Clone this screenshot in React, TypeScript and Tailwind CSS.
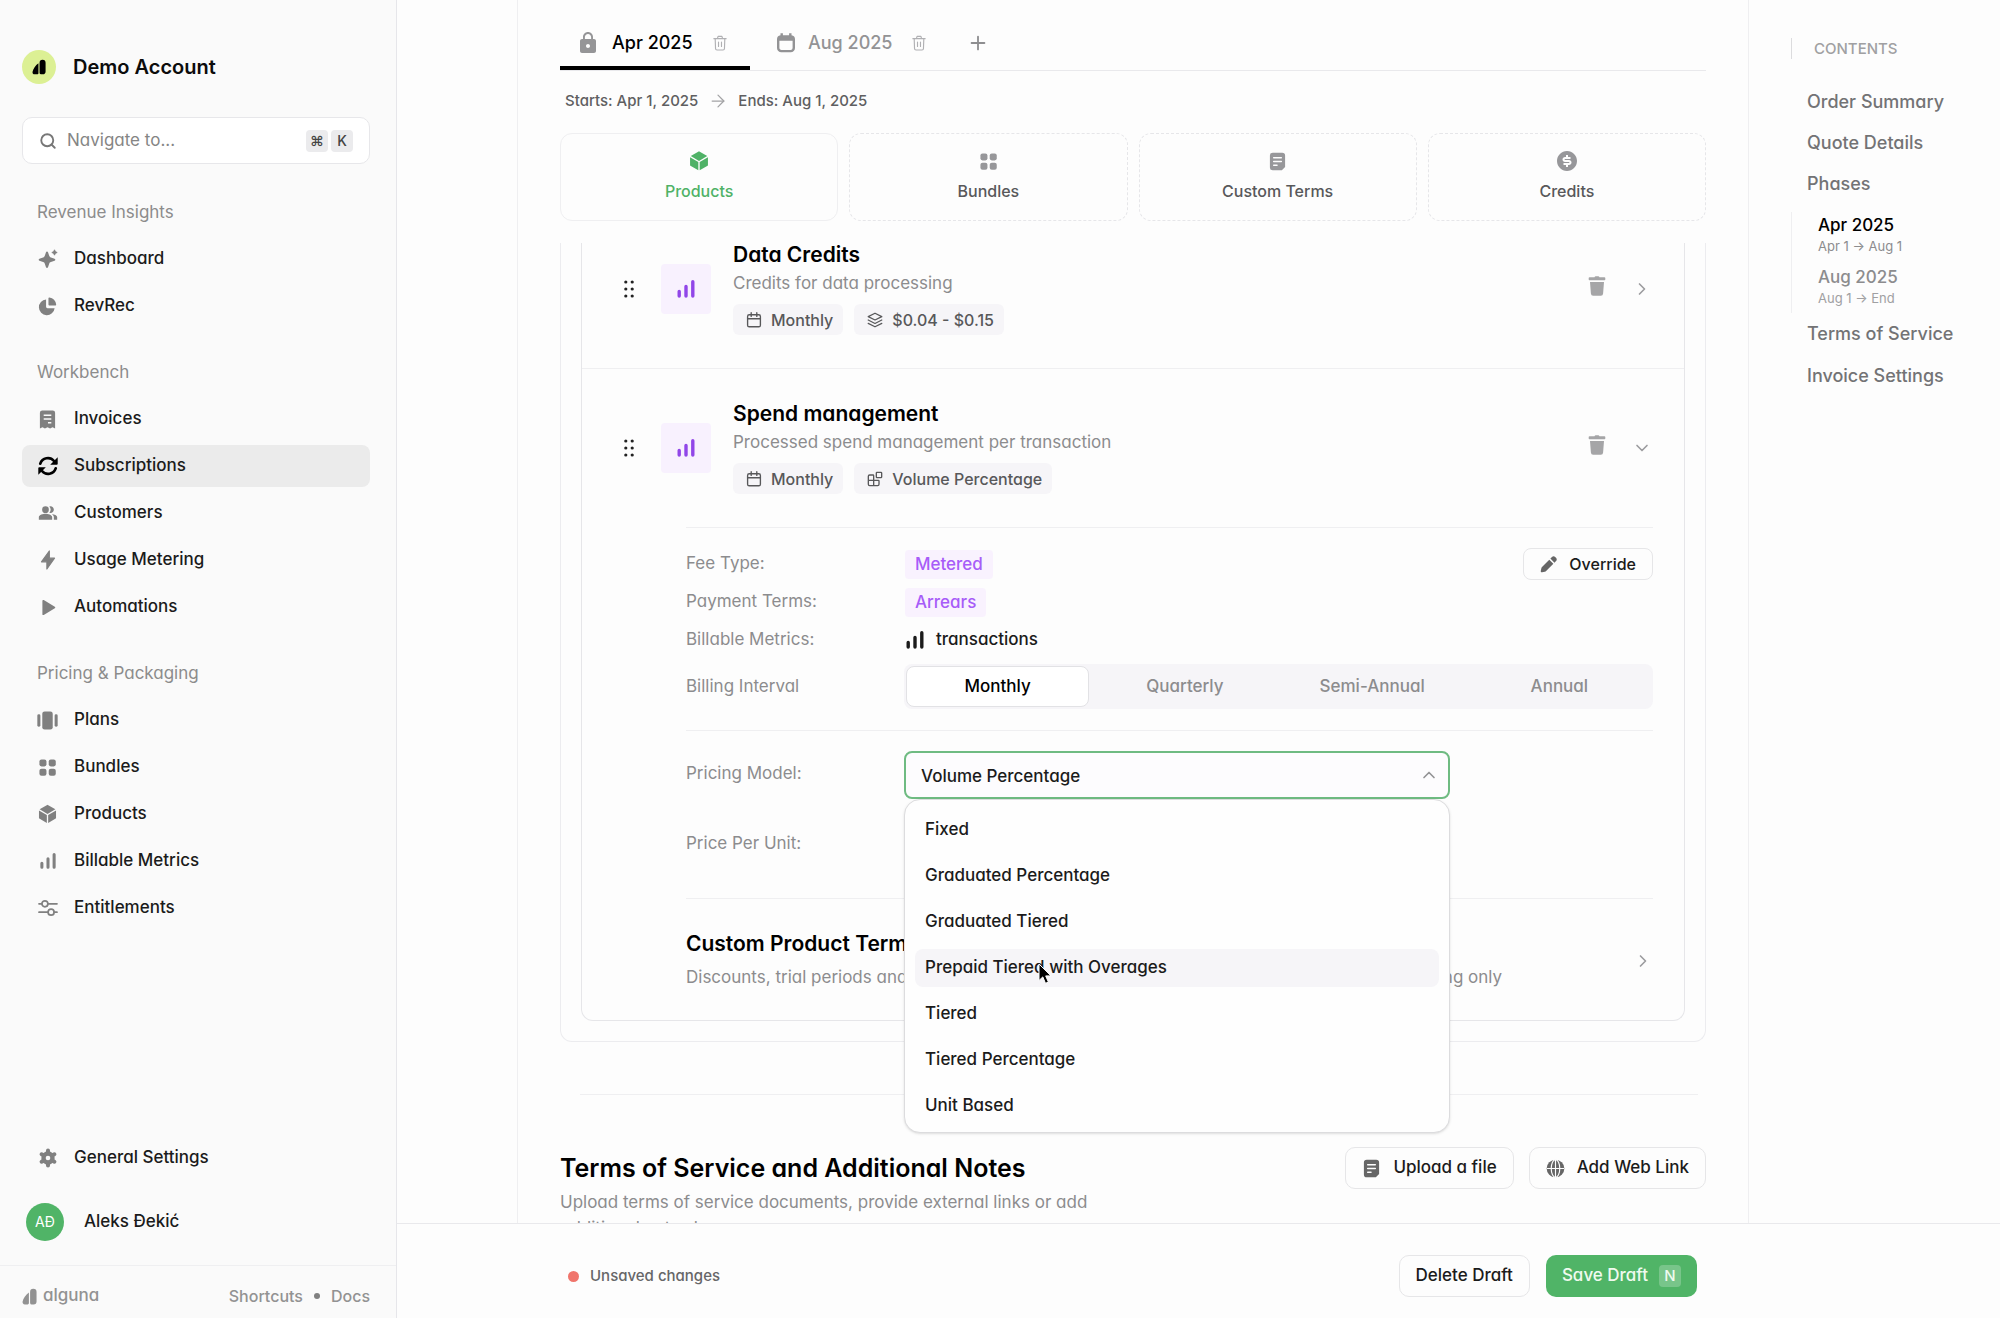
import { useState } from 'react'
import type { ReactNode } from 'react'
import { clsx } from 'clsx'
import { ArrowRight, Blocks, ChevronDown, ChevronRight, ChevronUp, Plus, Search } from 'lucide-react'
import { HiCube } from 'react-icons/hi2'
import { MdLock, MdPeopleAlt } from 'react-icons/md'
import { RiMoneyDollarCircleFill } from 'react-icons/ri'

type IconProps = { className?: string }

function SparkleIcon({ className }: IconProps) {
  return (
    <svg viewBox="0 0 20 20" fill="currentColor" className={className}>
      <path d="M9 2.5c.5 0 .8.3 1 .8l1.2 3.4c.3.9.8 1.4 1.7 1.7l3.7 1.3c1 .4 1 1.600 0 2l-3.700 1.300c-.9.3-1.400.8-1.700 1.700L10 18.200c-.4 1-1.600 1-2 0l-1.200-3.500c-.3-.9-.8-1.400-1.700-1.700L1.400 11.700c-1-.4-1-1.600 0-2l3.700-1.300c.9-.3 1.400-.8 1.700-1.700L8 3.300c.2-.5.5-.8 1-.8z" />
      <path d="M16.500 0.800l.9 1.800 1.800.9-1.800.9-.9 1.800-.9-1.800-1.800-.9 1.800-.9z" stroke="currentColor" strokeWidth=".8" strokeLinejoin="round" />
    </svg>
  )
}

function PieIcon({ className }: IconProps) {
  return (
    <svg viewBox="0 0 20 20" fill="currentColor" className={className}>
      <path d="M8.500 2.600a8.300 8.300 0 1 0 9 9.200H10a1.500 1.500 0 0 1-1.500-1.500z" />
      <path d="M11 1.200c0-.5.400-.8.900-.7a8.600 8.600 0 0 1 7.200 7.400c.1.600-.3 1.100-.9 1.100H12a1 1 0 0 1-1-1z" />
    </svg>
  )
}

function ReceiptIcon({ className }: IconProps) {
  return (
    <svg viewBox="0 0 20 20" className={className}>
      <path fill="currentColor" d="M4.500.5h11A2.500 2.500 0 0 1 18 3v16.500l-2.700-1.300-2.600 1.300L10 18.200l-2.700 1.300-2.600-1.300L2 19.500V3A2.500 2.500 0 0 1 4.500.5z" />
      <path stroke="#fafafa" strokeWidth="1.600" d="M6 5.500h8M6 9.500h8M10.500 13.500H14" />
    </svg>
  )
}

function SyncIcon({ className }: IconProps) {
  return (
    <svg viewBox="0 0 20 20" className={className}>
      <path fill="none" stroke="currentColor" strokeWidth="2.700" strokeLinecap="round" d="M2.300 7.600A8 8 0 0 1 16 5M17.700 12.400A8 8 0 0 1 4 15" />
      <path fill="currentColor" d="M19.700 1.200v6.800c0 .5-.4.800-.9.800h-6.600zM.3 18.800V12c0-.5.400-.8.900-.8h6.600z" />
    </svg>
  )
}

function BoltIcon({ className }: IconProps) {
  return (
    <svg viewBox="0 0 20 20" fill="currentColor" stroke="currentColor" strokeWidth="1.200" strokeLinejoin="round" className={className}>
      <path d="M11.300 1v7.200h5.200L8.900 19v-7.200H3.500z" />
    </svg>
  )
}

function PlayIcon({ className }: IconProps) {
  return (
    <svg viewBox="0 0 20 20" fill="currentColor" className={className}>
      <path d="M4 2.200c0-.9.900-1.400 1.600-1l13 7.900c.7.400.7 1.400 0 1.800l-13 7.900c-.7.400-1.600-.1-1.600-1z" />
    </svg>
  )
}

function CarouselIcon({ className }: IconProps) {
  return (
    <svg viewBox="0 0 22 20" fill="currentColor" className={className}>
      <rect x="5.500" y=".5" width="11" height="19" rx="2.500" />
      <rect x=".3" y="3.500" width="3.200" height="13" rx="1.400" />
      <rect x="18.500" y="3.500" width="3.200" height="13" rx="1.400" />
    </svg>
  )
}

function GridIcon({ className }: IconProps) {
  return (
    <svg viewBox="0 0 20 20" fill="currentColor" className={className}>
      <rect x="1.500" y="1.500" width="7.400" height="7.400" rx="2.200" />
      <rect x="11.300" y="1.500" width="7.400" height="7.400" rx="2.200" />
      <rect x="1.500" y="11.300" width="7.400" height="7.400" rx="2.200" />
      <rect x="11.300" y="11.300" width="7.400" height="7.400" rx="2.200" />
    </svg>
  )
}

function BarsIcon({ className }: IconProps) {
  return (
    <svg viewBox="0 0 20 20" fill="none" stroke="currentColor" strokeWidth="3.400" strokeLinecap="round" className={className}>
      <path d="M3.200 12.500V17M10 7.500V17M16.800 2.800V17" />
    </svg>
  )
}

function SlidersIcon({ className }: IconProps) {
  return (
    <svg viewBox="0 0 20 20" fill="none" stroke="currentColor" strokeWidth="1.700" strokeLinecap="round" className={className}>
      <path d="M1 5.800h2.800M10 5.800h9M1 14.200h9M16.200 14.200H19" />
      <circle cx="6.900" cy="5.800" r="3" />
      <circle cx="13.100" cy="14.200" r="3" />
    </svg>
  )
}

function GearIcon({ className }: IconProps) {
  return (
    <svg viewBox="0 0 20 20" className={className}>
      <path
        fill="none"
        stroke="currentColor"
        strokeWidth="4"
        strokeLinecap="round"
        d="M10 2.600v14.800M3.600 6.300l12.800 7.400M3.600 13.700l12.800-7.400"
      />
      <circle cx="10" cy="10" r="6.700" fill="currentColor" />
      <circle cx="10" cy="10" r="2.300" fill="#fafafa" />
    </svg>
  )
}

function CalendarTabIcon({ className }: IconProps) {
  return (
    <svg viewBox="0 0 20 20" className={className}>
      <path fill="currentColor" fillRule="evenodd" d="M4.500.3h2.400v2h6.200v-2h2.400v2A4 4 0 0 1 19 6.300V15a4.300 4.300 0 0 1-4.300 4.300H5.300A4.300 4.300 0 0 1 1 15V6.300a4 4 0 0 1 3.500-4zM3.400 7.800V15c0 1.100.9 1.900 2 1.900h9.200a2 2 0 0 0 2-1.900V7.800z" />
    </svg>
  )
}

function CalendarIcon({ className }: IconProps) {
  return (
    <svg viewBox="0 0 20 20" fill="none" stroke="currentColor" strokeWidth="1.700" strokeLinecap="round" className={className}>
      <rect x="2" y="3.500" width="16" height="15" rx="2" />
      <path d="M2 8.500h16M6.500 1v4.500M13.500 1v4.500" />
    </svg>
  )
}

function TrashOutlineIcon({ className }: IconProps) {
  return (
    <svg viewBox="0 0 16 18" fill="none" stroke="currentColor" strokeWidth="1.300" strokeLinecap="round" strokeLinejoin="round" className={className}>
      <path d="M1 4h14M5 4l.8-2.500h4.400L11 4M2.500 4l.4 11.300c0 1 .8 1.700 1.700 1.700h6.800c.9 0 1.700-.7 1.700-1.700L13.500 4M6.300 8v5M9.700 8v5" />
    </svg>
  )
}

function TrashIcon({ className }: IconProps) {
  return (
    <svg viewBox="0 0 18 20" fill="currentColor" className={className}>
      <path d="M6.500 1.200C6.700.6 7.200.3 7.800.3h2.400c.6 0 1.100.3 1.300.9h5c.5 0 .8.300.8.800v1.500c0 .4-.3.700-.7.700H1.400c-.4 0-.7-.3-.7-.7V2c0-.5.300-.8.8-.8z" />
      <path d="M2 6h14l-.9 11.500a2.300 2.300 0 0 1-2.300 2.200H5.200a2.300 2.300 0 0 1-2.300-2.200z" />
    </svg>
  )
}

function PencilIcon({ className }: IconProps) {
  return (
    <svg viewBox="0 0 20 20" fill="currentColor" className={className}>
      <path d="M10.900 4.300l4.800 4.800-8.500 8.500c-.4.400-.9.700-1.500.8l-3.300.7c-.9.200-1.700-.6-1.500-1.500l.7-3.300c.1-.6.400-1.100.8-1.500z" />
      <path d="M12.200 3l1.600-1.600a3 3 0 0 1 4.300 0l.5.500a3 3 0 0 1 0 4.300L17 7.800z" />
    </svg>
  )
}

function LayersIcon({ className }: IconProps) {
  return (
    <svg viewBox="0 0 20 20" fill="none" stroke="currentColor" strokeWidth="1.500" strokeLinecap="round" strokeLinejoin="round" className={className}>
      <path d="M10 1.500l8.500 4.300L10 10 1.500 5.800z" />
      <path d="M1.500 10l8.500 4.300 8.500-4.300M1.500 14.200l8.500 4.300 8.500-4.300" />
    </svg>
  )
}

function DocIcon({ className }: IconProps) {
  return (
    <svg viewBox="0 0 20 20" className={className}>
      <path fill="currentColor" d="M5 .8h10a3 3 0 0 1 3 3v12l-3.400 3.400H5a3 3 0 0 1-3-3V3.800a3 3 0 0 1 3-3z" />
      <path stroke="#fdfdfd" strokeWidth="1.600" strokeLinecap="round" d="M6 6h8M6 10h8M6 14h3.500" />
    </svg>
  )
}

function GlobeIcon({ className }: IconProps) {
  return (
    <svg viewBox="0 0 20 20" className={className}>
      <circle cx="10" cy="10" r="9.300" fill="currentColor" />
      <path fill="none" stroke="#fdfdfd" strokeWidth="1.200" d="M1 10h18M10 1v18" />
      <ellipse cx="10" cy="10" rx="4.500" ry="9.300" fill="none" stroke="#fdfdfd" strokeWidth="1.200" />
    </svg>
  )
}

function GripIcon({ className }: IconProps) {
  return (
    <svg viewBox="0 0 10 18" fill="currentColor" className={className}>
      {[2, 9, 16].map((y) => (
        <g key={y}>
          <circle cx="1.800" cy={y} r="1.600" />
          <circle cx="8.200" cy={y} r="1.600" />
        </g>
      ))}
    </svg>
  )
}

function BrandMark({ className }: IconProps) {
  return (
    <svg viewBox="0 0 20 22" fill="currentColor" className={className}>
      <path d="M9.200 5.500v14.300c0 1-.8 1.700-1.700 1.700H3.800C1.700 21.500.3 19.800.8 17.700c1-4.600 4-8.900 8.400-12.200z" />
      <path d="M10.800 5a4.300 4.300 0 0 1 8.600 0v12.500a4 4 0 0 1-4 4H13a2.200 2.200 0 0 1-2.200-2z" />
    </svg>
  )
}

function Cursor({ className }: IconProps) {
  return (
    <svg viewBox="0 0 14 22" className={className}>
      <path d="M1 1v16.500l3.800-3.600 2.700 6.400 2.900-1.200-2.700-6.200H13z" fill="#000" stroke="#fff" strokeWidth="1" />
    </svg>
  )
}

const NAV_SECTIONS = [
  {
    title: 'Revenue Insights',
    items: [
      { label: 'Dashboard', icon: <SparkleIcon className="size-5" /> },
      { label: 'RevRec', icon: <PieIcon className="size-[19px]" /> },
    ],
  },
  {
    title: 'Workbench',
    items: [
      { label: 'Invoices', icon: <ReceiptIcon className="size-[19px]" /> },
      { label: 'Subscriptions', icon: <SyncIcon className="size-5" />, active: true },
      { label: 'Customers', icon: <MdPeopleAlt className="size-5" /> },
      { label: 'Usage Metering', icon: <BoltIcon className="size-5" /> },
      { label: 'Automations', icon: <PlayIcon className="size-[17px]" /> },
    ],
  },
  {
    title: 'Pricing & Packaging',
    items: [
      { label: 'Plans', icon: <CarouselIcon className="h-[19px] w-[21px]" /> },
      { label: 'Bundles', icon: <GridIcon className="size-[19px]" /> },
      { label: 'Products', icon: <HiCube className="size-[22px]" /> },
      { label: 'Billable Metrics', icon: <BarsIcon className="size-[18px]" /> },
      { label: 'Entitlements', icon: <SlidersIcon className="size-5" /> },
    ],
  },
]

const CATEGORIES = [
  { label: 'Products', icon: <HiCube className="size-[22px]" />, active: true },
  { label: 'Bundles', icon: <GridIcon className="size-[19px]" /> },
  { label: 'Custom Terms', icon: <DocIcon className="size-[19px]" /> },
  { label: 'Credits', icon: <RiMoneyDollarCircleFill className="size-6" /> },
]

const INTERVALS = ['Monthly', 'Quarterly', 'Semi-Annual', 'Annual']

const PRICING_MODELS = [
  'Fixed',
  'Graduated Percentage',
  'Graduated Tiered',
  'Prepaid Tiered with Overages',
  'Tiered',
  'Tiered Percentage',
  'Unit Based',
]

function NavItem({ label, icon, active }: { label: string; icon: ReactNode; active?: boolean }) {
  return (
    <a
      href="#"
      className={clsx(
        'flex h-[42px] items-center gap-4 rounded-lg pl-[15px] text-[17px] font-medium text-[#1b1b1b]',
        active && 'bg-[#ebebeb]',
      )}
    >
      <span className={clsx('flex w-[21px] justify-center', active ? 'text-black' : 'text-[#808080]')}>{icon}</span>
      {label}
    </a>
  )
}

function Sidebar() {
  return (
    <aside className="flex w-[397px] shrink-0 flex-col border-r border-[#e6e6ea] bg-[#fafafa]">
      <div className="flex flex-1 flex-col pt-[50px] pr-[26px] pl-[22px]">
        <div className="flex items-center gap-[17px]">
          <span className="flex size-[34px] items-center justify-center rounded-full bg-[#dcf094]">
            <BrandMark className="h-4 w-[14px]" />
          </span>
          <span className="text-xl leading-[34px] font-semibold text-[#0c0c0c]">Demo Account</span>
        </div>

        <label className="mt-[33px] flex h-[47px] items-center rounded-[10px] border border-[#e7e7ea] bg-white px-4">
          <Search className="size-[18px] text-[#777]" strokeWidth={2.5} />
          <input
            type="text"
            placeholder="Navigate to..."
            aria-label="Navigate to"
            className="ml-[10px] min-w-0 flex-1 bg-transparent text-[17px] outline-none placeholder:text-[#858585]"
          />
          <kbd className="flex size-[22px] items-center justify-center rounded bg-[#ebebed] font-['Inter','DejaVu_Sans',sans-serif] text-sm font-medium text-[#444]">⌘</kbd>
          <kbd className="ml-[3px] flex size-[22px] items-center justify-center rounded bg-[#ebebed] font-['Inter',sans-serif] text-sm font-medium text-[#444]">K</kbd>
        </label>

        <nav className="mt-9 flex flex-col gap-[33px]">
          {NAV_SECTIONS.map((section) => (
            <div key={section.title} className="flex flex-col gap-[5px]">
              <h2 className="mb-[9px] pl-[15px] text-[17px] leading-6 text-[#8c8c8c]">{section.title}</h2>
              {section.items.map((item) => (
                <NavItem key={item.label} {...item} />
              ))}
            </div>
          ))}
        </nav>

        <div className="mt-auto mb-6">
          <NavItem label="General Settings" icon={<GearIcon className="size-5" />} />
          <button type="button" className="mt-6 flex items-center gap-5 pl-1 text-[17px] font-medium text-[#1b1b1b]">
            <span className="flex size-[38px] items-center justify-center rounded-full bg-[#50b467] text-sm font-normal text-white">
              AĐ
            </span>
            Aleks Đekić
          </button>
        </div>
      </div>

      <div className="flex h-[53px] items-center border-t border-[#efeff1] pt-2 pr-[26px] pl-[22px] text-[#929292]">
        <BrandMark className="h-[17px] w-[15px]" />
        <span className="ml-[6px] text-[17px] font-medium">alguna</span>
        <div className="ml-auto flex items-center gap-[11px] text-base font-medium">
          <a href="#">Shortcuts</a>
          <span className="size-[6px] rounded-full bg-[#808080]" />
          <a href="#">Docs</a>
        </div>
      </div>
    </aside>
  )
}

function PhaseHeader() {
  return (
    <div className="shrink-0 px-[42px] pb-[22px]">
      <div className="flex h-[71px] border-b border-[#e9e9ec]">
        <button type="button" className="flex w-[190px] items-center border-b-4 border-black pt-5 pl-4 text-lg font-medium text-black">
          <MdLock className="size-6 text-[#959597]" />
          <span className="ml-3">Apr 2025</span>
          <TrashOutlineIcon className="ml-5 h-4 w-[14px] text-[#b0b0b3]" />
        </button>
        <button type="button" className="flex items-center border-b-4 border-transparent pt-5 pl-[26px] text-lg font-medium text-[#939395]">
          <CalendarTabIcon className="size-5" />
          <span className="ml-3">Aug 2025</span>
          <TrashOutlineIcon className="ml-5 h-4 w-[14px] text-[#b0b0b3]" />
        </button>
        <button type="button" aria-label="Add phase" className="flex items-center pt-4 pl-[41px] text-[#8e8e90]">
          <Plus className="size-[22px]" />
        </button>
      </div>

      <div className="mt-5 flex h-5 items-center pl-[5px] text-[15px] font-medium text-[#5f5f61]">
        Starts: Apr 1, 2025
        <ArrowRight className="mx-[10px] size-5 text-[#a3a3a5]" strokeWidth={1.5} />
        Ends: Aug 1, 2025
      </div>

      <div className="mt-[22px] grid grid-cols-4 gap-[11px]">
        {CATEGORIES.map((category) => (
          <button
            key={category.label}
            type="button"
            className={clsx(
              'flex h-[88px] flex-col items-center rounded-xl border pt-[15px] text-base font-medium',
              category.active
                ? 'border-[#efeff1] text-[#4fb267]'
                : 'border-dashed border-[#e6e6e9] text-[#58585a]',
            )}
          >
            <span className={clsx('flex h-6 items-center', !category.active && 'text-[#97979a]')}>{category.icon}</span>
            <span className="mt-[6px]">{category.label}</span>
          </button>
        ))}
      </div>
    </div>
  )
}

function Pill({ icon, children }: { icon: ReactNode; children: ReactNode }) {
  return (
    <span className="flex h-[31px] items-center gap-[9px] rounded-md bg-[#f6f5f8] pr-[10px] pl-[13px] text-base font-medium text-[#58585a]">
      {icon}
      {children}
    </span>
  )
}

type ProductRowProps = {
  name: string
  description: string
  price: string
  priceIcon: ReactNode
  open?: boolean
}

function ProductRow({ name, description, price, priceIcon, open }: ProductRowProps) {
  return (
    <div className="flex items-center pr-8 pl-[42px]">
      <GripIcon className="h-[18px] w-[10px] text-[#222]" />
      <span className="ml-[27px] flex size-[50px] items-center justify-center rounded bg-[#f8f1fe] text-[#9146e8]">
        <BarsIcon className="size-5" />
      </span>
      <div className="ml-[22px] flex-1">
        <h3 className="text-[21px] leading-6 font-semibold text-black">{name}</h3>
        <p className="mt-1 text-[17px] leading-6 text-[#8c8c8e]">{description}</p>
        <div className="mt-[9px] flex gap-[11px]">
          <Pill icon={<CalendarIcon className="size-4" />}>Monthly</Pill>
          <Pill icon={priceIcon}>{price}</Pill>
        </div>
      </div>
      <button type="button" aria-label={`Delete ${name}`} className="pb-[6px] text-[#a5a5a7]">
        <TrashIcon className="h-5 w-[18px]" />
      </button>
      <button type="button" aria-label={`Toggle ${name}`} className="ml-[26px] text-[#9c9c9f]">
        {open ? <ChevronDown className="size-5" /> : <ChevronRight className="size-5" />}
      </button>
    </div>
  )
}

function PricingModelSelect() {
  const [open, setOpen] = useState(true)
  const [value, setValue] = useState('Volume Percentage')
  const [hovered, setHovered] = useState('Prepaid Tiered with Overages')

  return (
    <div className="relative w-[546px]">
      <select
        id="pricing-model"
        value={value}
        onChange={(e) => setValue(e.target.value)}
        onMouseDown={(e) => {
          e.preventDefault()
          setOpen(!open)
        }}
        className="h-12 w-full appearance-none rounded-lg border-2 border-[#6fbb82] bg-[#fdfcfe] px-[15px] pt-[3px] text-[17px] font-medium text-[#1b1b1b] outline-none"
      >
        <option>Volume Percentage</option>
        {PRICING_MODELS.map((model) => (
          <option key={model}>{model}</option>
        ))}
      </select>
      <ChevronUp className="pointer-events-none absolute top-[14px] right-[11px] size-5 text-[#939395]" />

      {open && (
        <ul
          role="listbox"
          className="absolute top-full left-0 z-10 flex w-full flex-col gap-2 rounded-2xl border border-[#dcdcde] bg-[#fefefe] px-[10px] pt-[11px] pb-[7px] shadow-sm"
        >
          {PRICING_MODELS.map((model) => (
            <li
              key={model}
              role="option"
              aria-selected={model === value}
              onMouseEnter={() => setHovered(model)}
              onClick={() => {
                setValue(model)
                setOpen(false)
              }}
              className={clsx(
                'relative flex h-[38px] items-center rounded-lg px-[10px] text-[17px] font-medium text-[#1b1b1b]',
                model === hovered && 'bg-[#f6f5f8]',
              )}
            >
              {model}
              {model === 'Prepaid Tiered with Overages' && (
                <Cursor className="pointer-events-none absolute top-[14px] left-[123px] h-[22px] w-[14px]" />
              )}
            </li>
          ))}
        </ul>
      )}
    </div>
  )
}

function Tag({ children }: { children: ReactNode }) {
  return <span className="rounded bg-[#f9f2fe] px-[10px] text-[17px] leading-[29px] font-medium text-[#a75cf8]">{children}</span>
}

function ProductDetails() {
  const [interval, setBillingInterval] = useState('Monthly')

  return (
    <div className="mt-[33px] pr-[31px] pb-[31px] pl-[104px] text-[17px] text-[#8c8c8e]">
      <div className="border-t border-[#efeff1] pt-5">
        <div className="flex h-8 items-center">
          <span className="w-[219px]">Fee Type:</span>
          <Tag>Metered</Tag>
          <button
            type="button"
            className="ml-auto flex h-8 items-center gap-3 rounded-lg border border-[#e6e6e8] px-4 text-base font-medium text-[#1b1b1b]"
          >
            <PencilIcon className="size-[17px] text-[#666]" />
            Override
          </button>
        </div>
        <div className="mt-[7px] flex h-[30px] items-center">
          <span className="w-[219px]">Payment Terms:</span>
          <Tag>Arrears</Tag>
        </div>
        <div className="mt-[11px] flex h-6 items-center">
          <span className="w-[219px]">Billable Metrics:</span>
          <span className="flex items-center gap-[11px] font-medium text-[#1b1b1b]">
            <BarsIcon className="size-5" />
            transactions
          </span>
        </div>
        <div className="mt-3 flex items-center">
          <span className="w-[218px]">Billing Interval</span>
          <div className="grid h-[45px] flex-1 grid-cols-4 gap-1 rounded-lg bg-[#f6f5f8] p-[2px]">
            {INTERVALS.map((item) => (
              <button
                key={item}
                type="button"
                aria-pressed={item === interval}
                onClick={() => setBillingInterval(item)}
                className={clsx(
                  'rounded-lg border font-medium',
                  item === interval ? 'border-[#e2e2e5] bg-white text-black' : 'border-transparent text-[#8c8c8e]',
                )}
              >
                {item}
              </button>
            ))}
          </div>
        </div>
      </div>

      <div className="mt-[21px] border-t border-[#efeff1] pt-5">
        <div className="flex items-center">
          <label htmlFor="pricing-model" className="w-[218px] pb-[2px]">
            Pricing Model:
          </label>
          <PricingModelSelect />
        </div>
        <div className="mt-8 leading-6">Price Per Unit:</div>
      </div>

      <div className="mt-[43px] flex items-center border-t border-[#efeff1] pt-[33px]">
        <div className="flex-1">
          <h3 className="text-[21px] leading-6 font-semibold text-black">Custom Product Terms</h3>
          <p className="mt-[9px] leading-6">
            Discounts, trial periods and other custom terms that apply to this specific product and its pricing only
          </p>
        </div>
        <button type="button" aria-label="Open custom product terms" className="text-[#9c9c9f]">
          <ChevronRight className="size-5" />
        </button>
      </div>
    </div>
  )
}

function ContentsNav() {
  return (
    <nav className="w-[252px] shrink-0 border-l border-[#efeff1] pt-[38px] pl-[42px] text-lg font-medium text-[#737375]">
      <h2 className="border-l border-[#dcdcde] pl-[22px] text-[15px] leading-[21px] text-[#a0a0a2]">CONTENTS</h2>
      <ul className="mt-[29px] flex flex-col gap-[13px] pl-4 leading-7">
        <li><a href="#">Order Summary</a></li>
        <li><a href="#">Quote Details</a></li>
        <li><a href="#">Phases</a></li>
      </ul>
      <ul className="mt-[14px] mb-[7px] flex flex-col gap-[10px] border-l border-[#efeff1] pb-[5px] pl-[26px]">
        <li className="leading-[22px]">
          <a href="#" className="block pt-[2px] text-[17px] text-black">Apr 2025</a>
          <span className="block text-[13px] leading-5 font-normal text-[#8c8c8e]">Apr 1 → Aug 1</span>
        </li>
        <li className="leading-[22px]">
          <a href="#" className="block text-[17px] text-[#8c8c8e]">Aug 2025</a>
          <span className="block text-[13px] leading-5 font-normal text-[#a0a0a2]">Aug 1 → End</span>
        </li>
      </ul>
      <ul className="flex flex-col gap-[14px] pl-4 leading-7">
        <li><a href="#">Terms of Service</a></li>
        <li><a href="#">Invoice Settings</a></li>
      </ul>
    </nav>
  )
}

function OutlineButton({ children }: { children: ReactNode }) {
  return (
    <button
      type="button"
      className="flex h-[42px] items-center gap-3 rounded-[10px] border border-[#e6e6e8] px-4 text-[17px] font-medium whitespace-nowrap text-[#1b1b1b]"
    >
      {children}
    </button>
  )
}

export default function App() {
  return (
    <div className="flex h-screen overflow-hidden bg-[#fdfdfd] font-['Inter',sans-serif] [font-feature-settings:'cv11']">
      <Sidebar />

      <div className="flex min-w-0 flex-1 flex-col">
        <div className="flex min-h-0 flex-1">
          <main className="ml-[120px] flex min-w-0 flex-1 flex-col border-l border-[#efeff1]">
            <PhaseHeader />

            <div className="min-h-0 flex-1 overflow-hidden px-[42px]">
              <div className="rounded-b-xl border border-t-0 border-[#ececef] px-5 pb-5">
                <div className="rounded-b-xl border border-t-0 border-[#e6e6e9]">
                  <div className="border-b border-[#efeff1] pb-[33px]">
                    <ProductRow
                      name="Data Credits"
                      description="Credits for data processing"
                      price="$0.04 - $0.15"
                      priceIcon={<LayersIcon className="size-4" />}
                    />
                  </div>
                  <div className="pt-[33px]">
                    <ProductRow
                      name="Spend management"
                      description="Processed spend management per transaction"
                      price="Volume Percentage"
                      priceIcon={<Blocks className="size-4" />}
                      open
                    />
                    <ProductDetails />
                  </div>
                </div>
              </div>

              <hr className="mt-[52px] mr-2 ml-5 border-[#efeff1]" />

              <section className="mt-[52px] flex items-start justify-between">
                <div className="max-w-[560px] pt-[7px]">
                  <h2 className="text-[25px] leading-7 font-semibold whitespace-nowrap text-black">Terms of Service and Additional Notes</h2>
                  <p className="mt-[7px] text-[17px] leading-[26px] text-[#8c8c8e]">
                    Upload terms of service documents, provide external links or add additional notes here.
                  </p>
                </div>
                <div className="flex gap-[15px]">
                  <OutlineButton>
                    <DocIcon className="size-[19px] text-[#666]" />
                    Upload a file
                  </OutlineButton>
                  <OutlineButton>
                    <GlobeIcon className="size-[19px] text-[#666]" />
                    Add Web Link
                  </OutlineButton>
                </div>
              </section>
            </div>
          </main>
          <ContentsNav />
        </div>

        <footer className="flex h-[95px] shrink-0 items-center border-t border-[#e9e9ec] pt-[10px] pr-[303px] pl-[171px]">
          <span className="size-[11px] rounded-full bg-[#f0756c]" />
          <span className="ml-[11px] text-[15px] font-medium text-[#666668]">Unsaved changes</span>
          <div className="ml-auto flex gap-4">
            <OutlineButton>Delete Draft</OutlineButton>
            <button
              type="button"
              className="flex h-[42px] items-center gap-[11px] rounded-[10px] bg-[#50b467] px-4 text-[17px] font-medium text-[#f0faef]"
            >
              Save Draft
              <kbd className="flex size-[22px] items-center justify-center rounded bg-[#78c58a] font-['Inter',sans-serif] text-[15px]">N</kbd>
            </button>
          </div>
        </footer>
      </div>
    </div>
  )
}
